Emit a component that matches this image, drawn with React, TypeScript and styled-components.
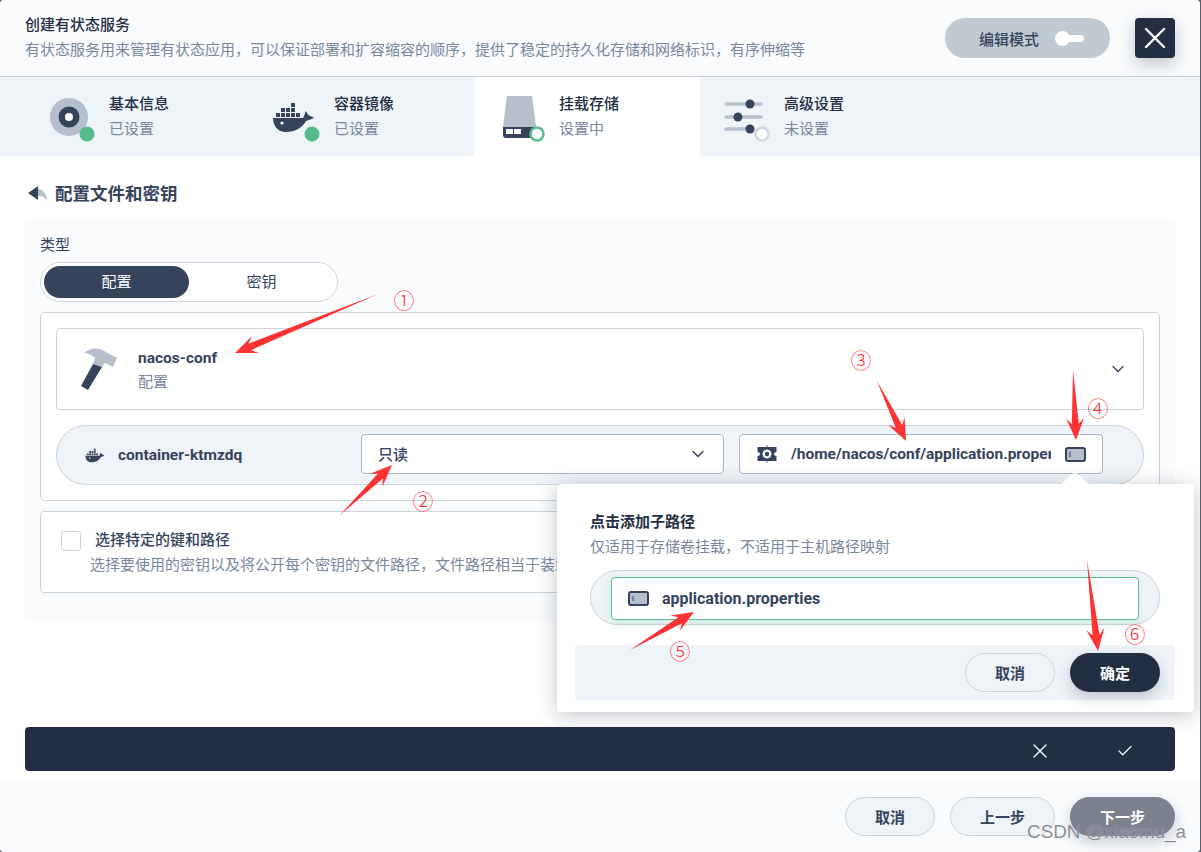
import React from 'react';
import styled, { createGlobalStyle } from 'styled-components';
import { X, Check, ChevronDown } from 'lucide-react';

const GlobalStyle = createGlobalStyle`
  html, body {
    margin: 0;
    padding: 0;
    background: #59606f;
  }
  * { box-sizing: border-box; }
`;

const Page = styled.div`
  position: relative;
  width: 1200px;
  height: 852px;
  display: flex;
  flex-direction: column;
  overflow: hidden;
  background: #ffffff;
  border-radius: 4px;
  color: #36435c;
  font-family: Roboto, "Noto Sans CJK SC", sans-serif;
  font-size: 15px;
`;

const Header = styled.div`
  height: 77px;
  flex: none;
  display: flex;
  align-items: flex-start;
  justify-content: space-between;
  padding: 14px 25px 0;
  background: #f9fbfd;
  border-bottom: 1px solid #ccd3db;
`;

const HeaderTitle = styled.div`
  font-size: 15px;
  line-height: 22px;
  font-weight: 500;
  color: #242e42;
`;

const HeaderDesc = styled.div`
  font-size: 15px;
  line-height: 22px;
  margin-top: 3px;
  color: #79879c;
`;

const HeaderActions = styled.div`
  display: flex;
  gap: 25px;
  margin-top: 4px;
`;

const EditMode = styled.div`
  width: 165px;
  height: 40px;
  display: flex;
  align-items: center;
  gap: 16px;
  padding-left: 34px;
  border-radius: 20px;
  background: #c1c9d1;
  color: #36435c;
  font-weight: 500;
`;

const ToggleTrack = styled.div`
  position: relative;
  width: 26px;
  height: 7px;
  margin-left: 3px;
  border-radius: 4px;
  background: #ffffff;
  &::before {
    content: '';
    position: absolute;
    left: -3px;
    top: -4px;
    width: 15px;
    height: 15px;
    border-radius: 50%;
    background: #ffffff;
  }
`;

const CloseButton = styled.div`
  width: 40px;
  height: 40px;
  display: flex;
  align-items: center;
  justify-content: center;
  border-radius: 4px;
  background: #242e42;
  color: #ffffff;
  box-shadow: 0 6px 16px rgba(36, 46, 66, 0.25);
`;

const Steps = styled.div`
  height: 79px;
  flex: none;
  display: flex;
  padding-left: 25px;
  background: #eff4f9;
`;

const Step = styled.div<{ $active?: boolean }>`
  width: 225px;
  display: flex;
  align-items: center;
  gap: 8px;
  padding-left: 20px;
  background: ${p => (p.$active ? '#ffffff' : 'transparent')};
`;

const StepText = styled.div`
  display: flex;
  flex-direction: column;
  gap: 3px;
`;

const StepTitle = styled.div`
  line-height: 22px;
  font-weight: 500;
  color: #242e42;
`;

const StepSub = styled.div`
  line-height: 22px;
  color: #79879c;
`;

const Body = styled.div`
  flex: 1;
  display: flex;
  flex-direction: column;
  padding: 25px 25px 11px;
  background: #ffffff;
`;

const SectionHead = styled.div`
  height: 23px;
  display: flex;
  align-items: center;
  gap: 7px;
  padding-left: 3px;
  margin-bottom: 14px;
  font-size: 17.5px;
  font-weight: 700;
`;

const Panel = styled.div`
  height: 404px;
  padding: 15px;
  border-radius: 4px;
  background: #f9fbfd;
`;

const FieldLabel = styled.div`
  line-height: 24px;
  font-size: 15px;
  margin-bottom: 5px;
`;

const Segmented = styled.div`
  width: 298px;
  height: 40px;
  display: flex;
  padding: 3px;
  border: 1px solid #d1d7df;
  border-radius: 20px;
  background: #ffffff;
  margin-bottom: 10px;
`;

const Segment = styled.div<{ $active?: boolean }>`
  width: 146px;
  padding-bottom: 4px;
  display: flex;
  align-items: center;
  justify-content: center;
  border-radius: 17px;
  background: ${p => (p.$active ? '#36435c' : 'transparent')};
  color: ${p => (p.$active ? '#ffffff' : '#36435c')};
`;

const CardGroup = styled.div`
  display: flex;
  flex-direction: column;
  gap: 15px;
  padding: 15px;
  border: 1px solid #ccd3db;
  border-radius: 4px;
  background: #ffffff;
  margin-bottom: 10px;
`;

const ConfigCard = styled.div`
  height: 82px;
  display: flex;
  align-items: center;
  padding: 0 15px 0 23px;
  border: 1px solid #ccd3db;
  border-radius: 4px;
  background: #ffffff;
`;

const ConfigText = styled.div`
  flex: 1;
  margin-left: 18px;
  margin-top: 2px;
`;

const ConfigName = styled.div`
  line-height: 24px;
  font-size: 15.5px;
  font-weight: 700;
`;

const ConfigSub = styled.div`
  line-height: 24px;
  color: #79879c;
`;

const MountRow = styled.div`
  height: 60px;
  display: flex;
  align-items: center;
  padding-left: 28px;
  border: 1px solid #ccd3db;
  border-radius: 30px;
  background: #eff4f9;
`;

const ContainerName = styled.div`
  width: 243px;
  margin-left: 13px;
  font-size: 15.5px;
  font-weight: 700;
`;

const SelectBox = styled.div`
  width: 363px;
  height: 40px;
  margin-bottom: 2px;
  display: flex;
  align-items: center;
  justify-content: space-between;
  padding: 0 15px 1px 16px;
  border: 1px solid #abb4c2;
  border-radius: 4px;
  background: #ffffff;
  font-weight: 500;
`;

const PathField = styled.div`
  position: relative;
  width: 364px;
  height: 40px;
  margin: 0 0 2px 15px;
  display: flex;
  align-items: center;
  padding: 0 16px 0 17px;
  border: 1px solid #abb4c2;
  border-radius: 4px;
  background: #ffffff;
`;

const PathText = styled.div`
  width: 260px;
  margin: 0 14px;
  overflow: hidden;
  white-space: nowrap;
  font-size: 15.5px;
  font-weight: 700;
`;

const Popover = styled.div`
  position: absolute;
  z-index: 2;
  top: 49px;
  right: -92px;
  width: 637px;
  height: 228px;
  display: flex;
  flex-direction: column;
  padding: 27px 19px 11px 18px;
  border-radius: 4px;
  background: #ffffff;
  box-shadow: 0 3px 20px rgba(36, 46, 66, 0.28);
  &::before {
    content: '';
    position: absolute;
    top: -12px;
    right: 105px;
    border-left: 14px solid transparent;
    border-right: 14px solid transparent;
    border-bottom: 12px solid #ffffff;
  }
`;

const PopoverTitle = styled.div`
  margin-left: 15px;
  line-height: 22px;
  font-size: 15px;
  font-weight: 700;
  color: #242e42;
`;

const PopoverDesc = styled.div`
  margin-left: 15px;
  margin-top: 3px;
  line-height: 22px;
  font-size: 15px;
  color: #79879c;
`;

const SubPathPill = styled.div`
  height: 55px;
  margin: 12px 15px 20px;
  padding: 6px 20px;
  border: 1px solid #ccd3db;
  border-radius: 28px;
  background: #eff4f9;
`;

const SubPathInput = styled.div`
  height: 43px;
  display: flex;
  align-items: center;
  gap: 13px;
  padding-left: 16px;
  border: 1px solid #55bc8a;
  border-radius: 4px;
  background: #ffffff;
  box-shadow: 0 4px 8px rgba(85, 188, 138, 0.18);
  font-size: 16px;
  font-weight: 700;
`;

const PopoverFooter = styled.div`
  height: 55px;
  display: flex;
  justify-content: flex-end;
  align-items: center;
  gap: 15px;
  padding: 0 15px 1px 0;
  border-radius: 4px;
  background: #eff4f9;
`;

const Button = styled.div<{ $kind?: 'dark' | 'muted'; $w: number }>`
  width: ${p => p.$w}px;
  height: 39px;
  display: flex;
  align-items: center;
  justify-content: center;
  border-radius: 20px;
  font-size: 15px;
  font-weight: 700;
  border: ${p => (p.$kind ? 'none' : '1px solid #ccd3db')};
  background: ${p => (p.$kind === 'dark' ? '#242e42' : p.$kind === 'muted' ? '#7c8190' : '#eff4f9')};
  color: ${p => (p.$kind ? '#ffffff' : '#36435c')};
  box-shadow: ${p => (p.$kind ? '0 6px 14px rgba(36, 46, 66, 0.22)' : 'none')};
`;

const KeysCard = styled.div`
  height: 82px;
  padding: 17px 20px;
  border: 1px solid #ccd3db;
  border-radius: 4px;
  background: #ffffff;
  overflow: hidden;
`;

const KeysHead = styled.div`
  display: flex;
  align-items: center;
  gap: 14px;
`;

const CheckBox = styled.div`
  width: 20px;
  height: 20px;
  margin-top: 2px;
  border: 1px solid #ccd3db;
  border-radius: 3px;
  background: #ffffff;
`;

const KeysTitle = styled.div`
  line-height: 22px;
  font-weight: 500;
`;

const KeysDesc = styled.div`
  margin: 3px 0 0 29px;
  line-height: 22px;
  white-space: nowrap;
  color: #79879c;
`;

const ActionBar = styled.div`
  height: 44px;
  margin-top: auto;
  display: flex;
  align-items: center;
  justify-content: flex-end;
  gap: 64px;
  padding: 4px 41px 0 0;
  border-radius: 4px;
  background: #242e42;
  color: #eff4f9;
`;

const Footer = styled.div`
  height: 70px;
  flex: none;
  display: flex;
  justify-content: flex-end;
  gap: 15px;
  padding: 15px 25px 0;
  background: #f9fbfd;
`;

const Overlay = styled.svg`
  position: absolute;
  z-index: 3;
  left: 0;
  top: 0;
  pointer-events: none;
`;

const Mark = styled.span<{ $x: number; $y: number }>`
  position: absolute;
  z-index: 3;
  left: ${p => p.$x - 12}px;
  top: ${p => p.$y - 12}px;
  width: 24px;
  line-height: 24px;
  text-align: center;
  font-size: 21px;
  font-weight: 300;
  color: #ff3333;
  font-family: "Noto Sans CJK SC", sans-serif;
`;

const Watermark = styled.div`
  position: absolute;
  z-index: 3;
  right: 14px;
  top: 820px;
  line-height: 24px;
  font-family: "Liberation Sans", sans-serif;
  font-size: 18.8px;
  color: rgba(80, 84, 94, 0.68);
  text-shadow: 0 0 1px rgba(255, 255, 255, 0.8);
`;

const ARROWS = [
  [378, 294, 235, 353],
  [340, 515, 392, 465],
  [877, 381, 906, 441],
  [1073, 370, 1076, 440],
  [630, 650, 694, 612],
  [1087, 560, 1098, 651],
];

const MARKS = [
  { n: '①', x: 404, y: 299 },
  { n: '②', x: 423, y: 500 },
  { n: '③', x: 861, y: 359 },
  { n: '④', x: 1098, y: 407 },
  { n: '⑤', x: 680, y: 650 },
  { n: '⑥', x: 1135, y: 633 },
];

const arrowPoints = ([x1, y1, x2, y2]: number[]) => {
  const len = Math.hypot(x2 - x1, y2 - y1);
  const ux = (x2 - x1) / len;
  const uy = (y2 - y1) / len;
  const at = (back: number, side: number) =>
    `${x2 - ux * back - uy * side},${y2 - uy * back + ux * side}`;
  return [`${x1},${y1}`, at(16, 3.5), at(22, 9), `${x2},${y2}`, at(22, -9), at(16, -3.5)].join(' ');
};

const Whale = () => (
  <>
    <path fill="#36435c" d="M3 29H33C34 27 35 25 35.5 22L39 26.5L44 28.5C41 31 38 31 36 32C32 39 25 43 16 43C8 43 3 37 3 29Z" />
    <circle cx="12" cy="34" r="1.6" fill="#ffffff" />
    <g fill="#36435c">
      <rect x="6" y="24" width="4" height="4" />
      <rect x="11" y="24" width="4" height="4" />
      <rect x="16" y="24" width="4" height="4" />
      <rect x="21" y="24" width="4" height="4" />
      <rect x="26" y="24" width="4" height="4" />
      <rect x="11" y="19" width="4" height="4" />
      <rect x="16" y="19" width="4" height="4" />
      <rect x="21" y="19" width="4" height="4" />
      <rect x="21" y="14" width="4" height="4" />
    </g>
  </>
);

const InfoIcon = () => (
  <svg width="56" height="56" viewBox="0 0 56 56">
    <circle cx="24" cy="28" r="19" fill="#b6c0cc" />
    <circle cx="24" cy="28" r="10.5" fill="#36435c" />
    <circle cx="24" cy="28" r="4" fill="#ffffff" />
    <circle cx="42" cy="45" r="7.5" fill="#55bc8a" />
  </svg>
);

const DockerIcon = () => (
  <svg width="56" height="56" viewBox="0 0 56 56">
    <Whale />
    <circle cx="42" cy="45" r="7.5" fill="#55bc8a" />
  </svg>
);

const DiskIcon = () => (
  <svg width="56" height="56" viewBox="0 0 56 56">
    <path fill="#b6c0cc" d="M12 7H37L41 38H8Z" />
    <path fill="#36435c" d="M8 38H41V46C41 48 40 49 38 49H11C9 49 8 48 8 46Z" />
    <rect x="11" y="40" width="7" height="5" fill="#ffffff" />
    <rect x="19" y="40" width="7" height="5" fill="#ffffff" />
    <circle cx="42" cy="45" r="6.5" fill="#ffffff" stroke="#55bc8a" strokeWidth="2.5" />
  </svg>
);

const SlidersIcon = () => (
  <svg width="56" height="56" viewBox="0 0 56 56">
    <g stroke="#b6c0cc" strokeWidth="3.5" strokeLinecap="round">
      <path d="M6 15H41" />
      <path d="M6 28H41" />
      <path d="M6 40H30" />
    </g>
    <g fill="#36435c">
      <circle cx="30" cy="15" r="4.5" />
      <circle cx="18" cy="28" r="4.5" />
      <circle cx="30" cy="40" r="4.5" />
    </g>
    <circle cx="42" cy="45" r="6.5" fill="#ffffff" stroke="#d1d7df" strokeWidth="2.5" />
  </svg>
);

const BackIcon = () => (
  <svg width="20" height="16" viewBox="0 0 20 16">
    <path fill="#b6c0cc" d="M10 4C15 4 19 9 19 16C17 12 14 11 10 11Z" />
    <path fill="#36435c" d="M0 8L10 1V15Z" />
  </svg>
);

const HammerIcon = () => (
  <svg width="40" height="44" viewBox="0 0 40 44">
    <path fill="#b6c0cc" d="M4 6C10 1 18 0 24 4L37 11L33 20L25 16L22 20L13 17L15 11C12 8 8 6 4 6Z" />
    <path fill="#36435c" d="M13 17L22 20L8 43L1 39Z" />
  </svg>
);

const SmallWhale = () => (
  <svg width="20" height="15" viewBox="2 13 43 31">
    <Whale />
  </svg>
);

const GearIcon = () => (
  <svg width="20" height="20" viewBox="0 0 20 20">
    <rect x="9" y="1" width="2" height="18" fill="#b6c0cc" />
    <path fill="#36435c" d="M0.5 3H19.5V8C18 8 17 9 17 10C17 11 18 12 19.5 12V17H0.5V12C2 12 3 11 3 10C3 9 2 8 0.5 8Z" />
    <circle cx="10" cy="10" r="3.2" fill="none" stroke="#ffffff" strokeWidth="2" />
    <path stroke="#ffffff" strokeWidth="1.6" d="M10 5.5V7M10 13V14.5M5.5 10H7M13 10H14.5M6.8 6.8L8 8M12 12L13.2 13.2M13.2 6.8L12 8M8 12L6.8 13.2" />
  </svg>
);

const SubPathIcon = () => (
  <svg width="21" height="15" viewBox="0 0 21 15">
    <rect x="1" y="1" width="19" height="13" rx="2" fill="#b6c0cc" stroke="#36435c" strokeWidth="2" />
    <path d="M5 5V10" stroke="#36435c" strokeWidth="1" />
  </svg>
);

const App = () => {
  return (
    <Page>
      <GlobalStyle />
      <Header>
        <div>
          <HeaderTitle>创建有状态服务</HeaderTitle>
          <HeaderDesc>有状态服务用来管理有状态应用，可以保证部署和扩容缩容的顺序，提供了稳定的持久化存储和网络标识，有序伸缩等</HeaderDesc>
        </div>
        <HeaderActions>
          <EditMode>
            编辑模式
            <ToggleTrack />
          </EditMode>
          <CloseButton>
            <X size={36} strokeWidth={1.6} />
          </CloseButton>
        </HeaderActions>
      </Header>
      <Steps>
        <Step>
          <InfoIcon />
          <StepText>
            <StepTitle>基本信息</StepTitle>
            <StepSub>已设置</StepSub>
          </StepText>
        </Step>
        <Step>
          <DockerIcon />
          <StepText>
            <StepTitle>容器镜像</StepTitle>
            <StepSub>已设置</StepSub>
          </StepText>
        </Step>
        <Step $active>
          <DiskIcon />
          <StepText>
            <StepTitle>挂载存储</StepTitle>
            <StepSub>设置中</StepSub>
          </StepText>
        </Step>
        <Step>
          <SlidersIcon />
          <StepText>
            <StepTitle>高级设置</StepTitle>
            <StepSub>未设置</StepSub>
          </StepText>
        </Step>
      </Steps>
      <Body>
        <SectionHead>
          <BackIcon />
          配置文件和密钥
        </SectionHead>
        <Panel>
          <FieldLabel>类型</FieldLabel>
          <Segmented>
            <Segment $active>配置</Segment>
            <Segment>密钥</Segment>
          </Segmented>
          <CardGroup>
            <ConfigCard>
              <HammerIcon />
              <ConfigText>
                <ConfigName>nacos-conf</ConfigName>
                <ConfigSub>配置</ConfigSub>
              </ConfigText>
              <ChevronDown size={20} strokeWidth={1.6} />
            </ConfigCard>
            <MountRow>
              <SmallWhale />
              <ContainerName>container-ktmzdq</ContainerName>
              <SelectBox>
                只读
                <ChevronDown size={20} strokeWidth={1.6} />
              </SelectBox>
              <PathField>
                <GearIcon />
                <PathText>/home/nacos/conf/application.properties</PathText>
                <SubPathIcon />
                <Popover>
                  <PopoverTitle>点击添加子路径</PopoverTitle>
                  <PopoverDesc>仅适用于存储卷挂载，不适用于主机路径映射</PopoverDesc>
                  <SubPathPill>
                    <SubPathInput>
                      <SubPathIcon />
                      application.properties
                    </SubPathInput>
                  </SubPathPill>
                  <PopoverFooter>
                    <Button $w={90}>取消</Button>
                    <Button $w={90} $kind="dark">确定</Button>
                  </PopoverFooter>
                </Popover>
              </PathField>
            </MountRow>
          </CardGroup>
          <KeysCard>
            <KeysHead>
              <CheckBox />
              <KeysTitle>选择特定的键和路径</KeysTitle>
            </KeysHead>
            <KeysDesc>选择要使用的密钥以及将公开每个密钥的文件路径，文件路径相当于装载点的相对路径</KeysDesc>
          </KeysCard>
        </Panel>
        <ActionBar>
          <X size={24} strokeWidth={1.4} />
          <Check size={18} strokeWidth={1.6} />
        </ActionBar>
      </Body>
      <Footer>
        <Button $w={90}>取消</Button>
        <Button $w={105}>上一步</Button>
        <Button $w={105} $kind="muted">下一步</Button>
      </Footer>
      <Overlay width="1200" height="852" viewBox="0 0 1200 852">
        {ARROWS.map((a, i) => (
          <polygon key={i} points={arrowPoints(a)} fill="#ff3333" />
        ))}
      </Overlay>
      {MARKS.map(m => (
        <Mark key={m.n} $x={m.x} $y={m.y}>{m.n}</Mark>
      ))}
      <Watermark>CSDN @xiaomu_a</Watermark>
    </Page>
  );
};

export default App;
